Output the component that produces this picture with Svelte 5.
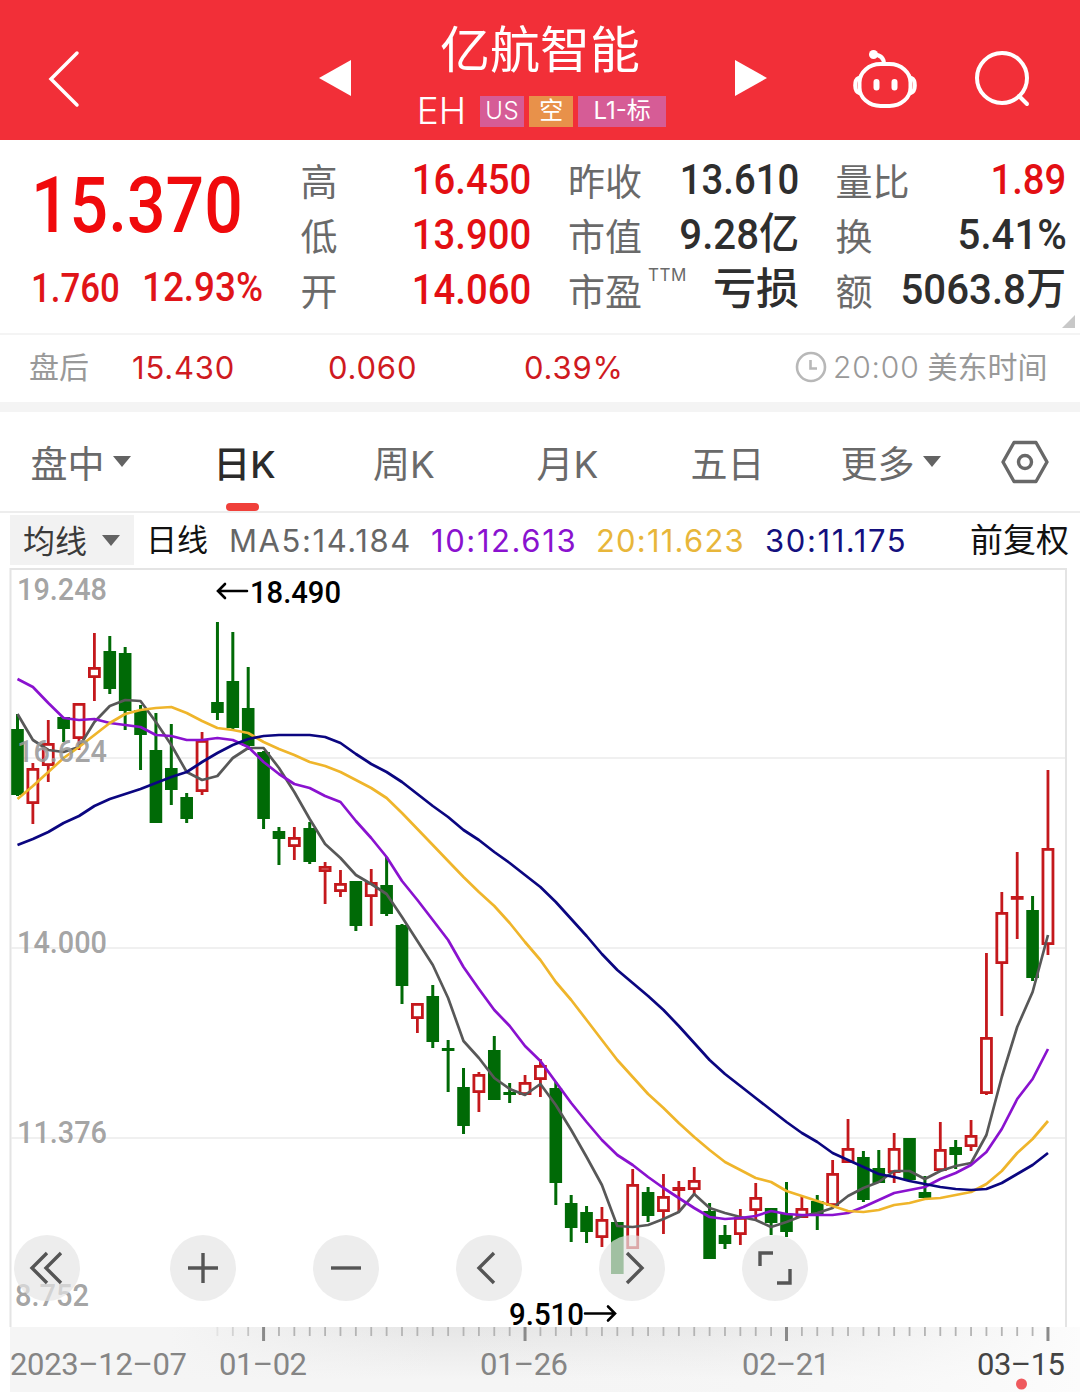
<script>
  const GREEN = '#006a06';
  const RED = '#c4181c';

  const step = 15.38;
  const cx = (i) => 17.5 + i * step;

  // [direction, high, body top, body bottom, low]
  const candles = [
    ['d', 714, 729, 795, 796], ['u', 763, 768, 804, 824], ['u', 720, 743, 766, 782],
    ['d', 717, 717, 729, 742], ['u', 703, 703, 739, 750], ['u', 633, 667, 678, 701],
    ['d', 636, 651, 689, 694], ['d', 647, 653, 711, 730], ['d', 705, 710, 735, 770],
    ['d', 713, 750, 823, 823], ['d', 724, 768, 790, 805], ['d', 793, 797, 819, 823],
    ['u', 732, 740, 792, 795], ['d', 622, 702, 713, 720], ['d', 632, 681, 728, 730],
    ['d', 667, 708, 746, 750], ['d', 751, 752, 819, 829], ['d', 827, 831, 839, 865],
    ['u', 827, 837, 847, 860], ['d', 822, 828, 862, 864], ['u', 862, 866, 872, 904],
    ['u', 870, 883, 892, 897], ['d', 881, 881, 926, 931], ['u', 869, 882, 897, 926],
    ['d', 857, 885, 914, 916], ['d', 924, 925, 986, 1004], ['u', 1003, 1003, 1019, 1033],
    ['d', 985, 996, 1042, 1048], ['d', 1040, 1048, 1051, 1092], ['d', 1068, 1087, 1126, 1134],
    ['u', 1072, 1074, 1093, 1112], ['d', 1036, 1050, 1100, 1100], ['d', 1083, 1092, 1095, 1103],
    ['u', 1075, 1082, 1095, 1095], ['u', 1059, 1065, 1080, 1097], ['d', 1082, 1088, 1183, 1205],
    ['d', 1195, 1203, 1228, 1242], ['d', 1206, 1212, 1232, 1243], ['u', 1207, 1219, 1238, 1247],
    ['d', 1222, 1222, 1274, 1274], ['u', 1169, 1184, 1249, 1249], ['d', 1187, 1192, 1216, 1222],
    ['u', 1174, 1196, 1212, 1234], ['u', 1181, 1187, 1191, 1212], ['u', 1167, 1180, 1190, 1194],
    ['d', 1203, 1211, 1259, 1259], ['d', 1225, 1235, 1244, 1249], ['u', 1209, 1217, 1235, 1245],
    ['u', 1183, 1197, 1211, 1221], ['d', 1208, 1208, 1223, 1235], ['d', 1182, 1214, 1232, 1237],
    ['u', 1196, 1208, 1218, 1218], ['d', 1195, 1201, 1214, 1230], ['u', 1160, 1173, 1206, 1206],
    ['u', 1119, 1148, 1163, 1163], ['d', 1151, 1157, 1200, 1202], ['d', 1150, 1168, 1183, 1183],
    ['u', 1133, 1148, 1173, 1183], ['d', 1138, 1138, 1180, 1180], ['d', 1176, 1192, 1198, 1198],
    ['u', 1122, 1149, 1171, 1171], ['d', 1140, 1147, 1155, 1169], ['u', 1120, 1135, 1147, 1151],
    ['u', 953, 1037, 1094, 1095], ['u', 892, 912, 964, 1016], ['u', 852, 896, 899, 939],
    ['d', 896, 910, 978, 981], ['u', 770, 848, 945, 955]
  ];

  const averages = [
    {
      color: '#585858',
      points: [714, 740, 750, 752, 747, 722, 706, 700, 701, 722, 745, 772, 780, 776, 758, 748, 748,
        768, 792, 819, 844, 858, 875, 884, 894, 917, 941, 965, 998, 1041, 1058, 1078, 1089, 1095,
        1084, 1105, 1130, 1157, 1185, 1226, 1227, 1225, 1219, 1212, 1194, 1208, 1213, 1217, 1220,
        1227, 1222, 1216, 1213, 1208, 1196, 1188, 1182, 1171, 1171, 1179, 1171, 1166, 1163, 1135,
        1077, 1027, 992, 935]
    },
    {
      color: '#8a12cf',
      points: [679, 687, 703, 718, 720, 719, 723, 725, 727, 735, 736, 740, 740, 738, 740, 747, 762,
        774, 784, 788, 796, 802, 821, 838, 857, 881, 900, 920, 940, 967, 989, 1010, 1026, 1046,
        1061, 1082, 1103, 1122, 1140, 1155, 1165, 1177, 1188, 1198, 1208, 1217, 1219, 1218, 1216,
        1211, 1214, 1215, 1215, 1215, 1213, 1207, 1200, 1193, 1190, 1187, 1179, 1173, 1165, 1152,
        1129, 1099, 1079, 1049]
    },
    {
      color: '#efb52b',
      points: [799, 786, 772, 758, 747, 735, 723, 714, 710, 708, 707, 713, 721, 728, 730, 733, 742,
        749, 755, 762, 766, 772, 780, 788, 798, 813, 829, 845, 861, 877, 892, 906, 923, 942, 960,
        982, 1000, 1020, 1040, 1060, 1077, 1094, 1108, 1123, 1137, 1150, 1162, 1170, 1178, 1182,
        1191, 1196, 1201, 1206, 1211, 1212, 1210, 1205, 1203, 1199, 1198, 1195, 1192, 1184, 1171,
        1153, 1139, 1121]
    },
    {
      color: '#0b0680',
      points: [845, 839, 832, 823, 816, 806, 799, 794, 789, 783, 777, 772, 762, 753, 745, 739, 736,
        735, 735, 735, 737, 743, 754, 764, 772, 782, 794, 806, 817, 830, 840, 852, 863, 875, 887,
        902, 919, 936, 954, 970, 983, 996, 1010, 1026, 1043, 1060, 1074, 1086, 1098, 1110, 1122,
        1133, 1142, 1153, 1160, 1167, 1174, 1177, 1181, 1184, 1187, 1189, 1190, 1189, 1183, 1174,
        1165, 1153]
    }
  ];

  const line = (points) => points.map((y, i) => `${cx(i).toFixed(1)},${y}`).join(' ');

  const gridLines = [758, 948, 1138];

  const priceLabels = [
    { text: '19.248', y: 600, w: 90 },
    { text: '16.624', y: 762, w: 90 },
    { text: '14.000', y: 953, w: 90 },
    { text: '11.376', y: 1143, w: 90 },
    { text: '8.752', y: 1306, w: 74, x: 15 }
  ];

  const dates = [
    { text: '2023–12–07', x: 10, w: 177 },
    { text: '01–02', x: 219, w: 88 },
    { text: '01–26', x: 480, w: 88 },
    { text: '02–21', x: 742, w: 88 },
    { text: '03–15', x: 977, w: 88, current: true }
  ];

  const ticks = Array.from({ length: 55 }, (_, n) => n + 13);
  const isMajor = (i) => (i - 16) % 17 === 0;

  const stats = [
    [
      { label: '高', value: '16.450', up: true },
      { label: '低', value: '13.900', up: true },
      { label: '开', value: '14.060', up: true }
    ],
    [
      { label: '昨收', value: '13.610' },
      { label: '市值', value: '9.28亿', kind: 'unit' },
      { label: '市盈', sup: 'TTM', value: '亏损', kind: 'words' }
    ],
    [
      { label: '量比', value: '1.89', up: true },
      { label: '换', value: '5.41%', kind: 'unit' },
      { label: '额', value: '5063.8万', kind: 'unit' }
    ]
  ];

  const tabs = [
    { name: '盘中', more: true },
    { name: '日K' },
    { name: '周K' },
    { name: '月K' },
    { name: '五日' },
    { name: '更多', more: true }
  ];
  let active = $state('日K');

  const controls = [
    { name: 'first', d: 'M33 18 18 33 33 48 M47 18 32 33 47 48' },
    { name: 'zoom in', d: 'M33 18V48 M18 33H48' },
    { name: 'zoom out', d: 'M18 33H48' },
    { name: 'previous', d: 'M38 18 23 33 38 48' },
    { name: 'next', d: 'M28 18 43 33 28 48' },
    { name: 'fullscreen', d: 'M18 31V18H31 M48 34V48H35' }
  ];
</script>

<div class="app">
  <header>
    <button class="back" aria-label="back">
      <svg width="34" height="58" viewBox="0 0 34 58">
        <path d="M30 3 4 29 30 55" />
      </svg>
    </button>
    <button class="step" aria-label="previous stock">
      <svg width="32" height="36" viewBox="0 0 32 36"><path d="M0 18 32 0V36Z" /></svg>
    </button>
    <div class="title">
      <h1>亿航智能</h1>
      <div class="code">
        <span class="symbol">EH</span>
        <span class="tag pink us">US</span>
        <span class="tag orange">空</span>
        <span class="tag pink level">L1-标</span>
      </div>
    </div>
    <button class="step" aria-label="next stock">
      <svg width="32" height="36" viewBox="0 0 32 36"><path d="M32 18 0 0V36Z" /></svg>
    </button>
    <div class="tools">
      <button aria-label="assistant">
        <svg width="66" height="60" viewBox="0 0 66 60">
          <rect x="7.500" y="15" width="51" height="42" rx="21" ry="18.500" />
          <path d="M32 15C32 9 29 6 22 5.500" />
          <circle class="solid" cx="21.500" cy="5.500" r="4.500" />
          <path d="M6.500 29C2 31 2 42 7 44 M59.500 29C64 31 64 42 59 44" />
          <path class="eye" d="M24.500 33V38.500 M42.500 33V38.500" />
        </svg>
      </button>
      <button aria-label="search">
        <svg width="58" height="58" viewBox="0 0 58 58">
          <circle cx="28" cy="28" r="25" />
          <path d="M45 46 53 54" />
        </svg>
      </button>
    </div>
  </header>

  <section class="quote">
    <div class="price">
      <div class="last"><span class="din">15.370</span></div>
      <div class="change">
        <span class="diff"><span class="din">1.760</span></span>
        <span class="din wide">12.93%</span>
      </div>
    </div>
    {#each stats as column}
      <dl>
        {#each column as item}
          <div class="row">
            <dt>{item.label}{#if item.sup}<sup>{item.sup}</sup>{/if}</dt>
            <dd
              class="din value"
              class:up={item.up}
              class:unit={item.kind === 'unit'}
              class:words={item.kind === 'words'}
            >
              {item.value}
            </dd>
          </div>
        {/each}
      </dl>
    {/each}
    <i class="corner"></i>
  </section>

  <section class="after">
    <span class="label">盘后</span>
    <span class="num">15.430</span>
    <span class="num">0.060</span>
    <span class="num">0.39%</span>
    <span class="time">
      <svg width="32" height="32" viewBox="0 0 32 32">
        <circle cx="16" cy="16" r="14" />
        <path d="M15.500 9V17.500H22" />
      </svg>
      <span class="clock">20:00</span>
      <span class="label">美东时间</span>
    </span>
  </section>

  <nav>
    {#each tabs as tab}
      <button class="tab" class:active={active === tab.name} onclick={() => (active = tab.name)}>
        {tab.name}{#if tab.more}<i class="caret"></i>{/if}
      </button>
    {/each}
    <button class="tab" aria-label="settings">
      <svg width="48" height="44" viewBox="0 0 48 44">
        <path d="M13 2.500H35L46 22 35 41.500H13L2 22Z" />
        <circle cx="24" cy="22" r="6.500" />
      </svg>
    </button>
  </nav>

  <div class="legend">
    <button class="indicator"><span>均线</span><i class="caret"></i></button>
    <span class="period">日线</span>
    <span class="ma ma5">MA5:14.184</span>
    <span class="ma ma10">10:12.613</span>
    <span class="ma ma20">20:11.623</span>
    <span class="ma ma30">30:11.175</span>
    <span class="adjust">前复权</span>
  </div>

  <div class="chart">
    <svg width="1080" height="825" viewBox="0 567 1080 825">
      <defs>
        <linearGradient id="strip" x1="0" y1="0" x2="0" y2="1">
          <stop offset="0" stop-color="#e6e6e6" />
          <stop offset="0.800" stop-color="#f5f5f5" />
        </linearGradient>
        <linearGradient id="edge" x1="0" y1="0" x2="1" y2="0">
          <stop offset="0" stop-color="#f5f5f5" />
          <stop offset="0.150" stop-color="#f5f5f5" />
          <stop offset="0.400" stop-color="#f5f5f5" stop-opacity="0" />
          <stop offset="0.650" stop-color="#f8f8f8" stop-opacity="0.200" />
          <stop offset="1" stop-color="#fcfcfc" />
        </linearGradient>
      </defs>

      <rect x="10" y="1327" width="1070" height="65" fill="url(#strip)" />
      <rect x="10" y="1327" width="1070" height="65" fill="url(#edge)" />
      <path class="frame" d="M10.500 1327V569H1066V1327" />
      {#each gridLines as y}
        <line class="grid" x1="11" x2="1065" y1={y} y2={y} />
      {/each}

      {#each candles as [dir, high, top, bottom, low], i}
        {#if dir === 'd'}
          <rect x={cx(i) - 1.5} y={high} width="3" height={low - high} fill={GREEN} />
          <rect x={cx(i) - 6.3} y={top} width="12.600" height={bottom - top} fill={GREEN} />
        {:else}
          <path
            d="M{cx(i)} {high}V{top} M{cx(i)} {bottom}V{low}"
            stroke={RED}
            stroke-width="2.800"
          />
          <rect
            x={cx(i) - 5}
            y={top + 1.4}
            width="10"
            height={Math.max(1, bottom - top - 2.8)}
            fill="#fff"
            stroke={RED}
            stroke-width="2.800"
          />
        {/if}
      {/each}

      {#each averages as ma}
        <polyline class="average" points={line(ma.points)} stroke={ma.color} />
      {/each}

      {#each priceLabels as p}
        <text class="axis" x={p.x ?? 17} y={p.y} textLength={p.w} lengthAdjust="spacingAndGlyphs">{p.text}</text>
      {/each}

      <path class="arrow" d="M247 591H219 M225 584 218 591 225 598" />
      <text class="peak" x="250" y="603" textLength="91" lengthAdjust="spacingAndGlyphs">18.490</text>
      <text class="peak" x="509" y="1325" textLength="75" lengthAdjust="spacingAndGlyphs">9.510</text>
      <path class="arrow" d="M585 1313.500H614 M608 1306.500 615 1313.500 608 1320.500" />

      {#each ticks as i}
        <line
          class="tick"
          class:major={isMajor(i)}
          x1={cx(i)}
          x2={cx(i)}
          y1="1327"
          y2={isMajor(i) ? 1341 : 1336}
          opacity={Math.min(1, (i - 12) / 4)}
        />
      {/each}
      {#each dates as d}
        <text
          class="date"
          class:current={d.current}
          x={d.x}
          y="1375"
          textLength={d.w}
          lengthAdjust="spacing">{d.text}</text>
      {/each}
      <circle cx="1021.500" cy="1384" r="5.500" fill="#ef5a5e" />
    </svg>

    <div class="controls">
      {#each controls as c}
        <button aria-label={c.name}>
          <svg width="66" height="66" viewBox="0 0 66 66"><path d={c.d} /></svg>
        </button>
      {/each}
    </div>
  </div>
</div>

<style>
  :global(body) {
    margin: 0;
    background: #fff;
  }

  .app {
    width: 1080px;
    height: 1392px;
    overflow: hidden;
    display: flex;
    flex-direction: column;
    background: #fff;
    font-family: Inter, "Noto Sans CJK SC", sans-serif;
    font-weight: 400;
  }

  button {
    border: 0;
    padding: 0;
    margin: 0;
    background: none;
    color: inherit;
    font: inherit;
  }

  svg {
    display: block;
    fill: none;
  }

  /* header */
  header {
    height: 140px;
    flex: none;
    display: grid;
    grid-template-columns: 283px 104px 306px 116px 271px;
    background: #f22f38;
    color: #fff;
  }

  .back {
    padding: 17px 0 0 47px;
  }

  .back svg {
    stroke: #fff;
    stroke-width: 3.5;
    stroke-linecap: round;
  }

  .step {
    display: flex;
    justify-content: center;
    align-items: center;
    padding-top: 15px;
  }

  .step svg {
    fill: #fff;
  }

  .title {
    display: flex;
    flex-direction: column;
    align-items: center;
  }

  h1 {
    margin: 20px 0 0;
    font-size: 50px;
    line-height: 60px;
    font-weight: 400;
  }

  .code {
    display: flex;
    align-items: center;
    height: 34px;
    margin: 14px 0 0 3px;
  }

  .symbol {
    font-size: 37px;
    font-weight: 300;
    margin-right: 14px;
    padding-bottom: 2px;
  }

  .tag {
    height: 31px;
    line-height: 30px;
    width: 44px;
    margin-right: 5px;
    text-align: center;
    font-size: 24px;
    font-weight: 300;
  }

  .us {
    letter-spacing: 0.5px;
  }

  .pink {
    background: #d65c96;
  }

  .orange {
    background: #e8914a;
    font-weight: 400;
  }

  .level {
    width: 88px;
    margin-right: 0;
    font-weight: 400;
  }

  .tools {
    display: flex;
    align-items: center;
    gap: 56px;
    padding: 17px 0 0 43px;
  }

  .tools svg {
    stroke: #fff;
    stroke-width: 4;
    stroke-linecap: round;
  }

  .tools .solid {
    fill: #fff;
    stroke: none;
  }

  .tools .eye {
    stroke-width: 6;
  }

  /* quote */
  .quote {
    position: relative;
    height: 181px;
    flex: none;
    display: grid;
    grid-template-columns: 264px 231px 231px 231px;
    column-gap: 36.5px;
    padding-top: 12px;
    border-bottom: 2px solid #f4f4f4;
  }

  /* condensed figures */
  .din {
    display: inline-block;
    font-family: Roboto, "Noto Sans CJK SC", sans-serif;
    font-weight: 500;
    white-space: nowrap;
    transform: scaleX(0.87);
    transform-origin: left center;
  }

  .price {
    color: #f00a0c;
    padding-left: 31px;
  }

  .last {
    font-size: 78px;
    line-height: 104px;
  }

  .change {
    display: flex;
    font-size: 40px;
    line-height: 60px;
    color: #e01418;
  }

  .diff {
    flex: none;
    width: 111px;
  }

  .din.wide {
    transform: scaleX(0.92);
  }

  dl {
    margin: 0;
  }

  .row {
    display: flex;
    justify-content: space-between;
    height: 55px;
  }

  dt {
    position: relative;
    font-size: 37px;
    line-height: 62px;
    color: #6a6a6a;
    white-space: nowrap;
  }

  sup {
    position: absolute;
    left: 100%;
    top: 4px;
    margin-left: 6px;
    font-size: 17px;
    line-height: 18px;
    letter-spacing: 0.5px;
  }

  dd {
    margin: 0;
    font-size: 43px;
    line-height: 54px;
    color: #2e2e2e;
  }

  .din.value {
    transform: scaleX(0.89);
    transform-origin: right center;
  }

  .din.unit {
    transform: scaleX(0.935);
  }

  .din.words {
    transform: none;
  }

  .value.up {
    color: #e30f13;
  }

  .corner {
    position: absolute;
    right: 5px;
    bottom: 5px;
    border-style: solid;
    border-width: 0 0 13px 13px;
    border-color: transparent transparent #c8c8c8;
  }

  /* after hours */
  .after {
    height: 67px;
    flex: none;
    display: grid;
    grid-template-columns: 103px 196px 196px 271px 1fr;
    align-items: center;
    padding-left: 29px;
    border-bottom: 10px solid #f4f4f4;
    color: #999;
    font-size: 30px;
  }

  .label {
    padding-bottom: 7px;
  }

  .num {
    padding-bottom: 3px;
    color: #cf1a1f;
    font-size: 31px;
    letter-spacing: 0.8px;
  }

  .time {
    display: flex;
    align-items: center;
    white-space: nowrap;
  }

  .time svg {
    stroke: #b8b8b8;
    stroke-width: 2.6;
    margin: 0 6px 3px 0;
  }

  .clock {
    padding-bottom: 4px;
    font-weight: 300;
    letter-spacing: 0.8px;
    margin-right: 8px;
  }

  /* tabs */
  nav {
    height: 101px;
    flex: none;
    display: grid;
    grid-template-columns: 161px 167px 152px 175px 145px 181px 88px;
    border-bottom: 2px solid #ededed;
    box-sizing: border-box;
    font-size: 37px;
    color: #6a6a6a;
  }

  .tab {
    position: relative;
    display: flex;
    align-items: center;
    justify-content: center;
  }

  .tab svg {
    stroke: #686868;
    stroke-width: 3.4;
    stroke-linejoin: round;
  }

  .active {
    color: #2b2b2b;
    font-weight: 500;
  }

  .active::after {
    content: "";
    position: absolute;
    bottom: 0;
    left: 65px;
    width: 33px;
    height: 8px;
    border-radius: 4px;
    background: #f0403a;
  }

  .caret {
    margin-left: 8px;
    border: solid transparent;
    border-width: 11px 9px 0;
    border-top-color: #636363;
  }

  /* legend */
  .legend {
    height: 54px;
    flex: none;
    display: flex;
    align-items: center;
    padding: 0 11px 0 10px;
    color: #111;
    font-size: 31px;
    white-space: nowrap;
  }

  .indicator {
    display: flex;
    align-items: center;
    box-sizing: border-box;
    width: 124px;
    height: 50px;
    padding-left: 13px;
    background: #f2f2f2;
    color: #3a3a3a;
    font-size: 32px;
  }

  .indicator span {
    padding-bottom: 3px;
  }

  .indicator .caret {
    margin-left: 15px;
  }

  .period {
    width: 83px;
    margin-left: 12px;
    padding-bottom: 5px;
  }

  .ma {
    letter-spacing: 1.6px;
  }

  .ma5 {
    width: 202px;
    color: #666;
  }

  .ma10 {
    width: 165px;
    color: #8a12cf;
  }

  .ma20 {
    width: 169px;
    color: #e8b63a;
    letter-spacing: 1.2px;
  }

  .ma30 {
    color: #14107e;
  }

  .adjust {
    margin-left: auto;
    padding-bottom: 4px;
    font-size: 33px;
  }

  /* chart */
  .chart {
    position: relative;
    height: 825px;
  }

  .frame {
    stroke: #e4e4e4;
    stroke-width: 2;
  }

  .grid {
    stroke: #ebebeb;
    stroke-width: 1.6;
  }

  .average {
    stroke-width: 2.7;
    stroke-linejoin: round;
  }

  text {
    font-family: Roboto, sans-serif;
    font-size: 31px;
  }

  .axis {
    fill: #999;
    fill-opacity: 0.9;
    font-size: 32px;
    font-weight: 500;
  }

  .peak {
    fill: #000;
    font-size: 32px;
    font-weight: 500;
  }

  .arrow {
    stroke: #000;
    stroke-width: 2.6;
    stroke-linecap: round;
  }

  .date {
    fill: #858585;
    font-weight: 400;
  }

  .current {
    fill: #444;
  }

  .tick {
    stroke: #b4b4b4;
    stroke-width: 1.8;
  }

  .major {
    stroke: #8a8a8a;
    stroke-width: 3;
  }

  .controls {
    position: absolute;
    left: 14px;
    top: 668px;
    display: flex;
    gap: 77px;
  }

  .controls button {
    width: 66px;
    height: 66px;
    border-radius: 50%;
    background: rgba(230, 230, 230, 0.7);
  }

  .controls button:first-child {
    margin-right: 13px;
  }

  .controls svg {
    stroke: #555;
    stroke-width: 3.4;
  }
</style>
